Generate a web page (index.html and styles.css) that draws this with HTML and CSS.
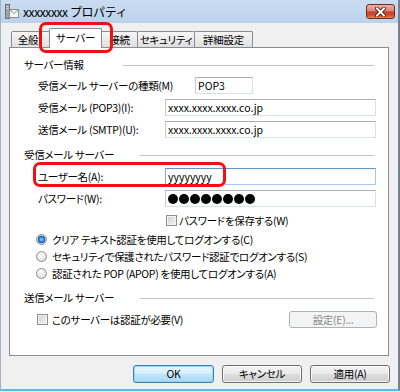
FILE: index.html
```html
<!DOCTYPE html>
<html lang="ja">
<head>
<meta charset="utf-8">
<title>xxxxxxxx プロパティ</title>
<link rel="stylesheet" href="styles.css">
</head>
<body>
<div class="window">
  <div class="titlebar">
    <svg class="app-icon" width="14" height="15" viewBox="0 0 14 15">
      <rect x="0.5" y="0.5" width="4" height="14" fill="#a3a3a3" stroke="#707070"/>
      <rect x="1.5" y="2" width="2" height="1" fill="#dcdcdc"/>
      <rect x="1.5" y="4" width="2" height="1" fill="#dcdcdc"/>
      <rect x="4.5" y="5.5" width="9" height="8" fill="#f6f6f6" stroke="#8c8c8c"/>
      <path d="M4.5 5.5 L9 9.5 L13.5 5.5" fill="none" stroke="#8c8c8c"/>
    </svg>
    <span class="title">xxxxxxxx プロパティ</span>
    <div class="close">
      <svg width="11" height="10" viewBox="0 0 11 10">
        <path d="M2 1.5 L9 8.5 M9 1.5 L2 8.5" stroke="#4a1409" stroke-width="3.8" stroke-linecap="square"/>
        <path d="M2 1.5 L9 8.5 M9 1.5 L2 8.5" stroke="#ffffff" stroke-width="2" stroke-linecap="square"/>
      </svg>
    </div>
  </div>
  <div class="client">
    <div class="tabs">
      <div class="tab t1">全般</div>
      <div class="tab t2 active">サーバー</div>
      <div class="tab t3">接続</div>
      <div class="tab t4">セキュリティ</div>
      <div class="tab t5">詳細設定</div>
    </div>
    <div class="panel">
      <div class="group-head g1"><span class="gh-label w1">サーバー情報</span><span class="gh-line"></span></div>
      <div class="row first"><span class="label wide">受信メール サーバーの種類(M)</span><span class="input small">POP3</span></div>
      <div class="row"><span class="label">受信メール (POP3)(I):</span><span class="input">xxxx.xxxx.xxxx.co.jp</span></div>
      <div class="row"><span class="label">送信メール (SMTP)(U):</span><span class="input">xxxx.xxxx.xxxx.co.jp</span></div>

      <div class="group-head g2"><span class="gh-label w2">受信メール サーバー</span><span class="gh-line"></span></div>
      <div class="row user"><span class="label">ユーザー名(A):</span><span class="input focused">yyyyyyyy</span></div>
      <div class="row pass"><span class="label">パスワード(W):</span><span class="input dots"><i></i><i></i><i></i><i></i><i></i><i></i><i></i><i></i></span></div>
      <div class="check-row save"><span class="checkbox"></span><span class="ctext">パスワードを保存する(W)</span></div>
      <div class="radios">
        <div class="radio-row"><span class="radio on"></span><span>クリア テキスト認証を使用してログオンする(C)</span></div>
        <div class="radio-row"><span class="radio"></span><span>セキュリティで保護されたパスワード認証でログオンする(S)</span></div>
        <div class="radio-row"><span class="radio"></span><span>認証された POP (APOP) を使用してログオンする(A)</span></div>
      </div>

      <div class="group-head g3"><span class="gh-label w2">送信メール サーバー</span><span class="gh-line"></span></div>
      <div class="check-row auth"><span class="checkbox"></span><span class="ctext">このサーバーは認証が必要(V)</span><span class="btn disabled">設定(E)...</span></div>
    </div>
    <div class="buttons">
      <span class="btn default">OK</span>
      <span class="btn">キャンセル</span>
      <span class="btn">適用(A)</span>
    </div>
  </div>
  <div class="mark mark-tab"></div>
  <div class="mark mark-user"></div>
</div>
</body>
</html>
```
FILE: styles.css
```css
* { box-sizing: border-box; margin: 0; padding: 0; }
html, body { width: 400px; height: 392px; overflow: hidden; }
body {
  background: #dcecf7;
  font-family: "Noto Sans CJK JP", "Noto Sans", sans-serif;
  font-size: 10.5px;
  letter-spacing: -0.3px;
  color: #000;
  font-feature-settings: "palt" 1;
}
.window {
  position: relative;
  width: 400px;
  height: 391px;
  background: #f0f0f0;
  border-left: 1px solid #9fb3c8;
  border-right: 2px solid #76828f;
  border-bottom: 2px solid #4fbfea;
  display: flex;
  flex-direction: column;
}
.titlebar {
  height: 23px;
  flex: none;
  display: flex;
  align-items: flex-start;
  background: linear-gradient(to bottom, #cadcf1 0%, #bcd2eb 100%);
}
.app-icon { margin: 4px 0 0 4px; flex: none; }
.title {
  margin: 4px 0 0 4px;
  font-size: 12px;
  letter-spacing: -0.4px;
  font-feature-settings: normal;
  line-height: 16px;
  white-space: nowrap;
}
.close {
  margin: 4px 3px 0 auto;
  width: 29px;
  height: 15px;
  border: 1px solid #7a2a1c;
  border-radius: 3px;
  background: linear-gradient(to bottom, #eab0a3 0%, #dd8774 45%, #c8452d 52%, #c94a30 75%, #e4864c 100%);
  display: flex;
  align-items: center;
  justify-content: center;
}
.client {
  flex: 1;
  padding: 5px 0 0 8px;
  display: flex;
  flex-direction: column;
}
.tabs {
  height: 19px;
  margin-left: 2px;
  display: flex;
  align-items: flex-end;
  position: relative;
  z-index: 1;
}
.tab {
  height: 16px;
  margin-right: -1px;
  border: 1px solid #898c95;
  border-bottom: none;
  border-radius: 2px 2px 0 0;
  background: linear-gradient(to bottom, #f6f6f6, #e0e0e0);
  display: flex;
  align-items: center;
  justify-content: center;
  white-space: nowrap;
  line-height: 14px;
}
.tab.active {
  height: 20px;
  margin-bottom: -1px;
  background: #fff;
  position: relative;
  z-index: 2;
  padding-bottom: 2px;
}
.t1 { width: 39px; padding-right: 5px; }
.t2 { width: 53px; }
.t3 { width: 37px; }
.t4 { width: 58px; }
.t5 { width: 59px; }
.panel {
  width: 380px;
  height: 309px;
  flex: none;
  border: 1px solid #898c95;
  background: #fff;
  padding: 0 11px 0 14px;
  display: flex;
  flex-direction: column;
}
.group-head {
  height: 14px;
  display: flex;
  align-items: center;
  flex: none;
}
.g1 { margin-top: 10px; }
.g2 { margin-top: 10px; }
.g3 { margin-top: 9px; }
.gh-label { flex: none; white-space: nowrap; line-height: 14px; }
.w1 { width: 99px; }
.w2 { width: 116px; }
.gh-line { flex: 1; height: 1px; background: #c3c3c3; margin-right: 3px; }
.row {
  height: 17px;
  margin-top: 5px;
  padding-left: 14px;
  display: flex;
  align-items: center;
  flex: none;
}
.row.user { margin-top: 6px; }
.label { width: 127px; flex: none; white-space: nowrap; line-height: 14px; }
.label.wide { width: 157px; }
.input {
  width: 211px;
  height: 17px;
  border: 1px solid #dbdfe6;
  border-top-color: #abadb3;
  border-left-color: #c6c9cf;
  background: #fff;
  padding-left: 2px;
  line-height: 15px;
  letter-spacing: 0;
  white-space: nowrap;
  display: flex;
  align-items: center;
}
.input.small { width: 58px; }
.input.focused { border-color: #a9c8e8; border-top-color: #5f95c9; border-left-color: #86acd6; }
.dots i {
  width: 10px;
  height: 10px;
  border-radius: 50%;
  background: #000;
  margin-right: 1px;
  flex: none;
}
.check-row {
  display: flex;
  align-items: center;
  flex: none;
  height: 13px;
  line-height: 13px;
  white-space: nowrap;
}
.checkbox {
  width: 11px;
  height: 11px;
  flex: none;
  border: 1px solid #8e8f8f;
  background: linear-gradient(135deg, #c9ccd1 0%, #eeeeee 80%, #f8f8f8 100%);
  box-shadow: inset 0 0 0 1px #f4f4f4;
}
.save { margin-top: 7px; padding-left: 142px; }
.save .checkbox { margin-right: 2px; }
.radios { margin-top: 4px; display: flex; flex-direction: column; flex: none; }
.radio-row {
  height: 17px;
  padding-left: 12px;
  display: flex;
  align-items: center;
  white-space: nowrap;
  line-height: 14px;
}
.radio {
  width: 11px;
  height: 11px;
  flex: none;
  margin-right: 5px;
  border-radius: 50%;
  border: 1px solid #8f9191;
  background: radial-gradient(circle at 40% 35%, #fdfdfd 0%, #e6e6e6 55%, #cfcfcf 100%);
}
.radio.on {
  background: radial-gradient(circle at 50% 50%, #8fd0fb 0px, #3f8fd8 2px, #1c5ca8 3.5px, #cfdff0 4.2px, #e4e4e4 100%);
}
.auth { margin-top: 6px; height: 17px; padding-left: 13px; }
.auth .checkbox { margin-right: 4px; }
.auth .btn { margin-left: auto; width: 88px; height: 17px; }
.btn {
  display: flex;
  align-items: center;
  justify-content: center;
  height: 18px;
  border: 1px solid #707070;
  border-radius: 3px;
  background: linear-gradient(to bottom, #f3f3f3 0%, #ebebeb 48%, #dddddd 52%, #cfcfcf 100%);
  box-shadow: inset 0 0 0 1px rgba(255,255,255,0.7);
  white-space: nowrap;
  line-height: 14px;
}
.btn.disabled {
  border-color: #adb2b5;
  background: #f4f4f4;
  box-shadow: none;
  color: #8b8b8b;
}
.btn.default {
  border-color: #3c7fb1;
  background: linear-gradient(to bottom, #e8f5fc 0%, #d8eefb 48%, #bee6fd 52%, #a7d9f5 100%);
  box-shadow: inset 0 0 0 1px #94d8f8;
}
.buttons {
  margin-top: 9px;
  padding-right: 8px;
  display: flex;
  justify-content: flex-end;
  gap: 8px;
}
.buttons .btn { width: 80px; }
.buttons .btn.default { width: 81px; }
.mark {
  position: absolute;
  border: 3px solid #ee1111;
  border-radius: 7px;
  z-index: 5;
}
.mark-tab { left: 38px; top: 22px; width: 74px; height: 31px; }
.mark-user { left: 32px; top: 162px; width: 193px; height: 25px; }
```
